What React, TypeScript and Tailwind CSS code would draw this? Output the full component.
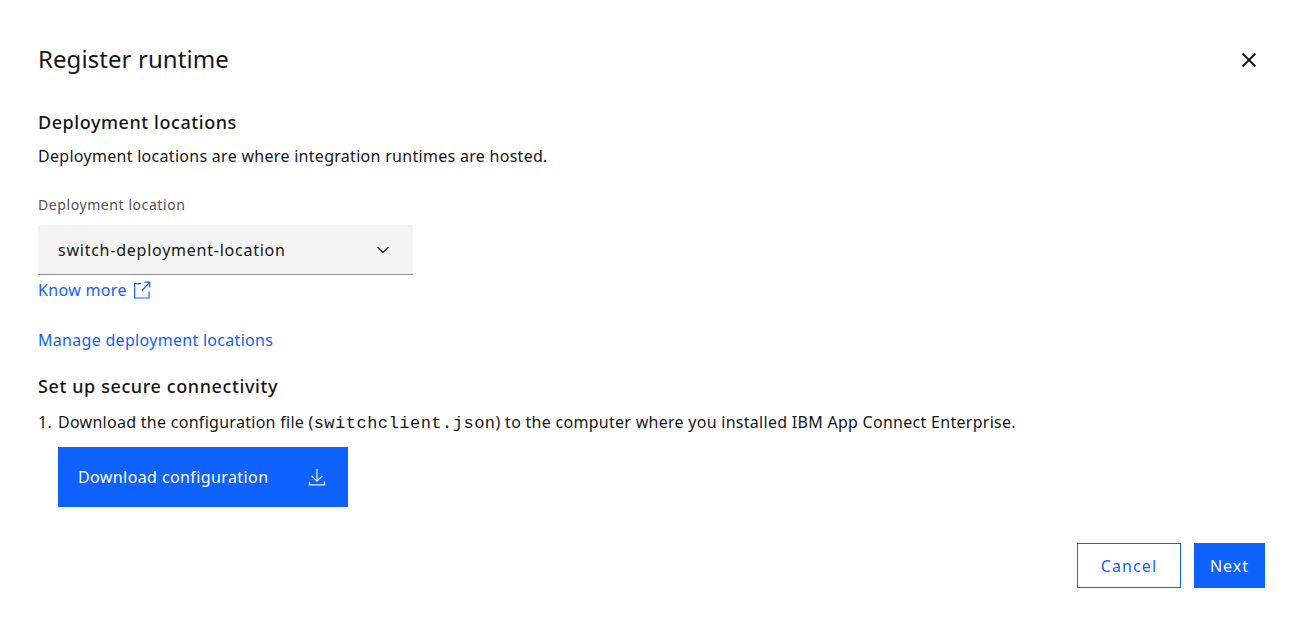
const SANS = "font-['Noto_Sans','Liberation_Sans',sans-serif]";

function ExternalIcon() {
  return (
    <svg width="18" height="18" viewBox="0 0 18 18" fill="none" stroke="#0f62fe" strokeWidth="1.2">
      <path d="M8 2.6H1.6V17H16V10.6" />
      <path d="M9 9.5 16.4 1.6M11.5 1.2h5.3v5.3" />
    </svg>
  );
}

function ChevronDown() {
  return (
    <svg width="16" height="16" viewBox="0 0 16 16" fill="none" stroke="#161616" strokeWidth="1.1">
      <path d="M2.5 5 8 10.5 13.5 5" />
    </svg>
  );
}

function DownloadIcon() {
  return (
    <svg width="18" height="18" viewBox="0 0 18 18" fill="none" stroke="#ffffff" strokeWidth="1.2" className="opacity-90">
      <path d="M9 1v12M3.6 7.8 9 13.2l5.4-5.4" />
      <path d="M1.5 13.5v3.4h15v-3.4" />
    </svg>
  );
}

function CloseIcon() {
  return (
    <svg width="16" height="16" viewBox="0 0 16 16" fill="none" stroke="#161616" strokeWidth="1.8">
      <path d="M1.5 1.5l13 13M14.5 1.5l-13 13" />
    </svg>
  );
}

export default function App() {
  return (
    <div className={`${SANS} h-[623px] w-[1301px] overflow-hidden bg-white text-[16px] text-[#161616]`}>
      <div className="flex h-full flex-col pl-[38px] pr-[36px]">
        <div className="mt-[37px] flex h-[46px] items-center justify-between pr-[8px]">
          <h1 className="relative -top-px text-[24px] leading-[46px] tracking-[0.07px]">Register runtime</h1>
          <CloseIcon />
        </div>

        <h2 className="mt-[26px] h-[26px] text-[18px] font-medium leading-[26px] tracking-[0.56px]">Deployment locations</h2>
        <p className="mt-[9px] h-[24px] leading-[24px] tracking-[0.29px]">
          Deployment locations are where integration runtimes are hosted.
        </p>

        <label className="mt-[27px] h-[20px] text-[14px] leading-[20px] tracking-[0.58px] text-[#525252]">Deployment location</label>
        <div className="mt-[10px] flex h-[50px] w-[375px] items-center justify-between border-b border-[#8d8d8d] bg-[#f4f4f4] pl-[20px] pr-[22px]">
          <span className="tracking-[0.76px]">switch-deployment-location</span>
          <ChevronDown />
        </div>

        <div className="mt-[3px] flex h-[24px] items-center gap-[6px] text-[#0f62fe]">
          <span className="leading-[24px] tracking-[0.33px]">Know more</span>
          <ExternalIcon />
        </div>
        <div className="mt-[26px] h-[24px] leading-[24px] tracking-[0.3px] text-[#0f62fe]">Manage deployment locations</div>

        <h2 className="mt-[21px] h-[26px] text-[18px] font-medium leading-[26px] tracking-[0.6px]">Set up secure connectivity</h2>

        <div className="mt-[11px] flex h-[24px] leading-[24px] tracking-[0.28px]">
          <span className="w-[20px]">1.</span>
          <span>
            Download the configuration file (
            <span className="font-['Liberation_Mono',monospace] text-[17px] tracking-[0.5px]">switchclient.json</span>
            ) to the computer where you installed IBM App Connect Enterprise.
          </span>
        </div>

        <div className="ml-[20px] mt-[13px] flex h-[60px] w-[290px] items-center justify-between bg-[#0f62fe] pl-[20px] pr-[22px] text-white">
          <span className="tracking-[0.4px]">Download configuration</span>
          <DownloadIcon />
        </div>

        <div className="mt-[36px] flex justify-end gap-[13px]">
          <div className="flex h-[45px] w-[104px] items-center justify-center border border-[#0f62fe] tracking-[1.1px] text-[#0f62fe]">Cancel</div>
          <div className="flex h-[45px] w-[71px] items-center justify-center bg-[#0f62fe] tracking-[1px] text-white">Next</div>
        </div>
      </div>
    </div>
  );
}
